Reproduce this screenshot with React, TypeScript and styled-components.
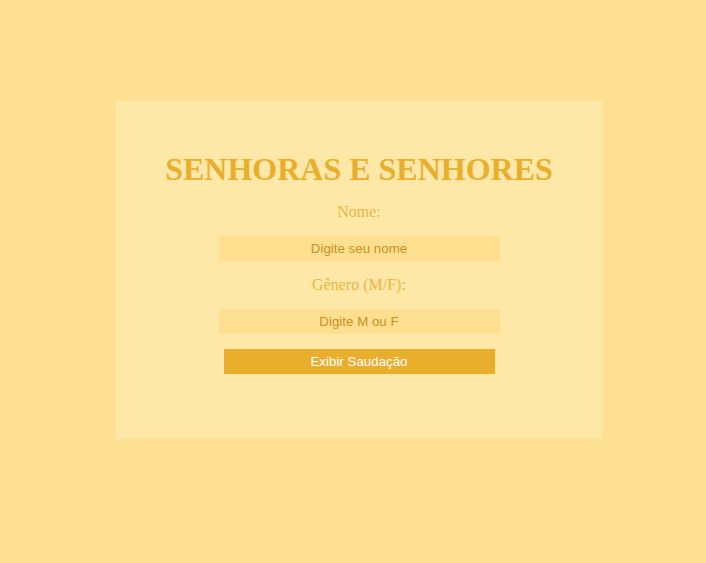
import React from "react";
import styled, { createGlobalStyle } from "styled-components";

const GlobalStyle = createGlobalStyle`
  html, body {
    margin: 0;
    padding: 0;
    background: #fde091;
  }
  body {
    font-family: "Liberation Serif", "Times New Roman", serif;
  }
`;

const Page = styled.div`
  min-height: 563px;
  box-sizing: border-box;
  padding: 101px 0 0 116px;
`;

const Card = styled.form`
  width: 486px;
  height: 338px;
  box-sizing: border-box;
  padding-top: 50px;
  background: #fde8a8;
  display: flex;
  flex-direction: column;
  align-items: center;
  gap: 15px;
`;

const Title = styled.h1`
  margin: 0 0 1px;
  font-family: "Liberation Serif", "Times New Roman", serif;
  font-size: 32px;
  line-height: 36px;
  font-weight: bold;
  color: #e9ae2c;
`;

const Label = styled.label`
  font-family: "Liberation Serif", "Times New Roman", serif;
  font-size: 16px;
  line-height: 18px;
  color: #ebb443;
`;

const Input = styled.input`
  width: 281px;
  height: 25px;
  box-sizing: border-box;
  border: none;
  outline: none;
  padding: 0 4px;
  background: #fde08f;
  text-align: center;
  font-family: "Liberation Sans", Arial, sans-serif;
  font-size: 13.33px;
  color: #c48c22;
  &::placeholder {
    color: #c99020;
    opacity: 1;
  }
`;

const Button = styled.button<{ $width: number }>`
  width: ${(p) => p.$width}px;
  height: 25px;
  box-sizing: border-box;
  border: none;
  padding: 0;
  background: #e9ae2c;
  color: #ffffff;
  font-family: "Liberation Sans", Arial, sans-serif;
  font-size: 13.33px;
  cursor: pointer;
`;

export default function App() {
  return (
    <>
      <GlobalStyle />
      <Page>
        <Card onSubmit={(e) => e.preventDefault()}>
          <Title>SENHORAS E SENHORES</Title>
          <Label htmlFor="nome">Nome:</Label>
          <Input id="nome" type="text" placeholder="Digite seu nome" />
          <Label htmlFor="genero">Gênero (M/F):</Label>
          <Input id="genero" type="text" placeholder="Digite M ou F" />
          <Button type="button" $width={271}>
            Exibir Saudação
          </Button>
        </Card>
      </Page>
    </>
  );
}
